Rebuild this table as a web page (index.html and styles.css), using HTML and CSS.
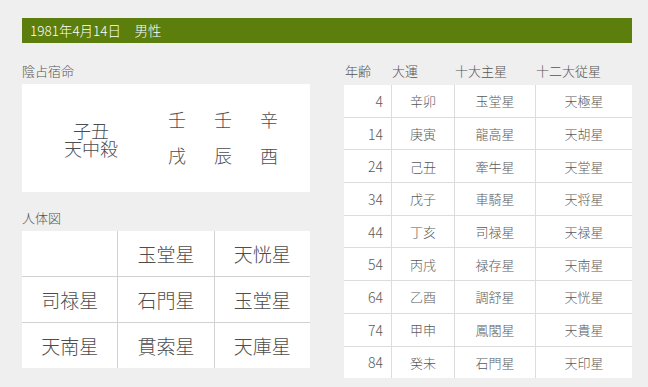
FILE: index.html
```html
<!DOCTYPE html>
<html lang="ja">
<head>
<meta charset="utf-8">
<link rel="stylesheet" href="styles.css">
</head>
<body>
<div class="page">
  <div class="bar">1981年4月14日　男性</div>
  <div class="content">
    <div class="left">
      <div class="label">陰占宿命</div>
      <div class="insen">
        <div class="tenchu"><span class="tl">子丑</span><span class="tl">天中殺</span></div>
        <div class="kanshi">
          <span>壬</span><span>壬</span><span>辛</span>
          <span>戌</span><span>辰</span><span>酉</span>
        </div>
      </div>
      <div class="label label2">人体図</div>
      <div class="jintai">
        <div></div><div>玉堂星</div><div>天恍星</div>
        <div>司禄星</div><div>石門星</div><div>玉堂星</div>
        <div>天南星</div><div>貫索星</div><div>天庫星</div>
      </div>
    </div>
    <div class="right">
      <div class="thead">
        <span class="c1">年齢</span><span class="c2">大運</span><span class="c3">十大主星</span><span class="c4">十二大従星</span>
      </div>
      <div class="taiun">
        <div class="num">4</div><div>辛卯</div><div>玉堂星</div><div>天極星</div>
        <div class="num">14</div><div>庚寅</div><div>龍高星</div><div>天胡星</div>
        <div class="num">24</div><div>己丑</div><div>牽牛星</div><div>天堂星</div>
        <div class="num">34</div><div>戊子</div><div>車騎星</div><div>天将星</div>
        <div class="num">44</div><div>丁亥</div><div>司禄星</div><div>天禄星</div>
        <div class="num">54</div><div>丙戌</div><div>禄存星</div><div>天南星</div>
        <div class="num">64</div><div>乙酉</div><div>調舒星</div><div>天恍星</div>
        <div class="num">74</div><div>甲申</div><div>鳳閣星</div><div>天貴星</div>
        <div class="num">84</div><div>癸未</div><div>石門星</div><div>天印星</div>
      </div>
    </div>
  </div>
</div>
</body>
</html>
```

FILE: styles.css
```css
html, body {
  margin: 0;
  padding: 0;
  background: #efefef;
}
body {
  font-family: "Noto Sans CJK JP", "Noto Sans", sans-serif;
  font-weight: 300;
  color: #555;
}
.page {
  padding: 18px 16px 0 22px;
}
.bar {
  height: 25px;
  line-height: 25px;
  background: #5b7e0c;
  color: #fff;
  font-size: 13.5px;
  padding-left: 8px;
}
.content {
  display: flex;
  gap: 34px;
  margin-top: 18px;
}
.left, .right {
  width: 288px;
}
.label {
  font-size: 13px;
  line-height: 20px;
  height: 20px;
  margin-bottom: 3px;
  color: #555;
}
.label2 {
  margin-top: 16px;
}
.insen {
  height: 108px;
  background: #fff;
  display: flex;
  align-items: center;
}
.tenchu {
  width: 126px;
  padding-left: 6px;
  display: flex;
  flex-direction: column;
  align-items: center;
  font-size: 18px;
  color: #4d4d4d;
  margin-top: 2px;
}
.tl {
  display: block;
  line-height: 18px;
  height: 18px;
}
.kanshi {
  display: grid;
  grid-template-columns: repeat(3, 46px);
  grid-auto-rows: 36px;
  align-items: center;
  justify-items: center;
  font-size: 18px;
  color: #4d4d4d;
  margin-top: -3px;
}
.jintai {
  display: grid;
  grid-template-columns: repeat(3, 1fr);
  grid-auto-rows: 45px;
  gap: 1px;
  background: #d2d2d2;
}
.jintai div {
  background: #fff;
  display: flex;
  align-items: center;
  justify-content: center;
  font-size: 19px;
  color: #4d4d4d;
}
.thead {
  display: flex;
  font-size: 13px;
  line-height: 20px;
  height: 20px;
  margin-bottom: 4px;
  color: #555;
}
.thead span { display: block; }
.thead .c1 { width: 48px; padding-left: 1px; box-sizing: border-box; }
.thead .c2 { width: 63px; }
.thead .c3 { width: 81px; }
.thead .c4 { width: 96px; }
.taiun {
  display: grid;
  grid-template-columns: 47px 62px 80px 96px;
  grid-auto-rows: 31.7px;
  gap: 1px;
  background: #dcdcdc;
}
.taiun div {
  background: #fff;
  display: flex;
  align-items: center;
  justify-content: center;
  font-size: 13px;
  color: #5a5a5a;
}
.taiun .num {
  justify-content: flex-end;
  padding-right: 8px;
  font-size: 14px;
}
```
